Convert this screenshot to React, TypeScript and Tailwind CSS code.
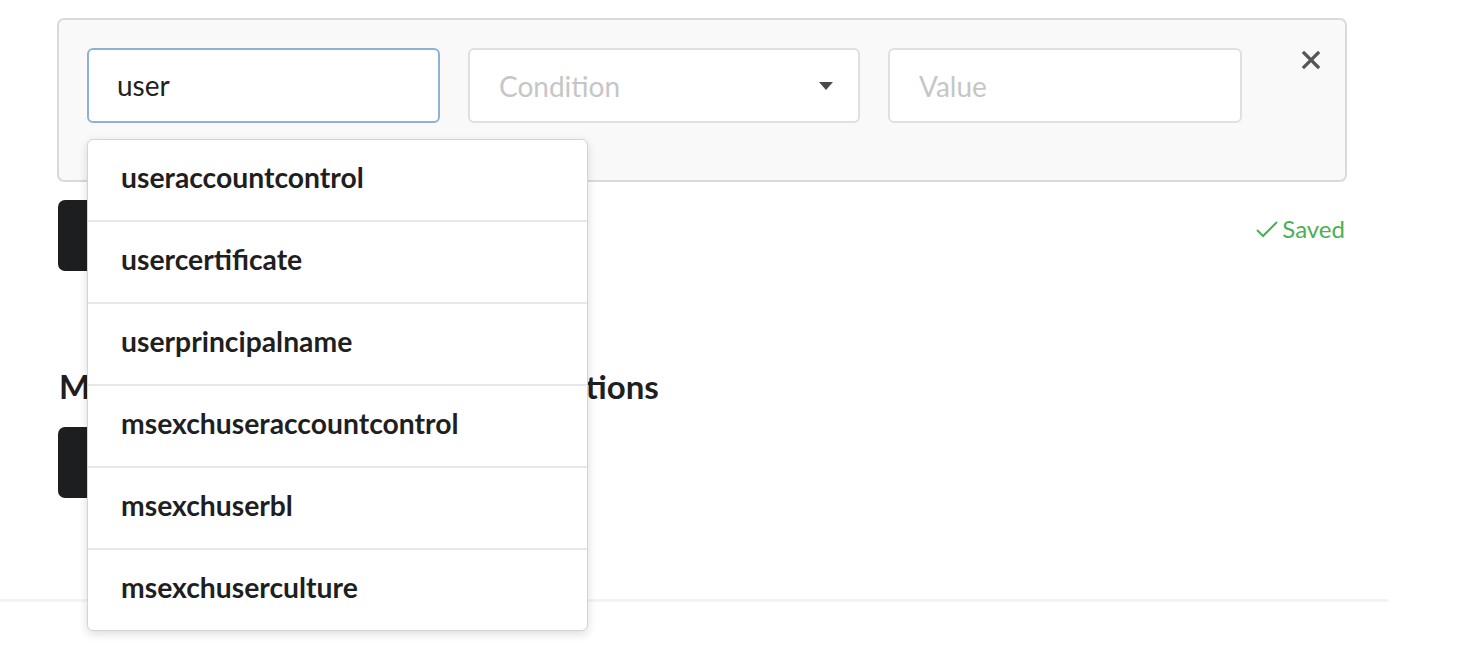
const suggestions = [
  'useraccountcontrol',
  'usercertificate',
  'userprincipalname',
  'msexchuseraccountcontrol',
  'msexchuserbl',
  'msexchuserculture',
]

export default function App() {
  return (
    <main className="min-h-screen bg-white text-[#222] font-['Lato','Open_Sans',sans-serif]">
      <div className="pl-[57px] pt-[18px] w-[1388px]">
        {/* Filter row */}
        <div className="w-[1290px] bg-[#f9f9f9] border-2 border-[#dadada] rounded-[7px] pl-[28px] pt-[28px] pb-[57px] flex">
          <div className="relative">
            <div className="w-[353px] h-[75px] bg-white border-2 border-[#8cb2d8] rounded-[6px] flex items-center pl-[28px] text-[28px] pb-px">
              user
            </div>
            <div className="absolute top-[91px] left-0 z-10 w-[501px] bg-white border border-[#d4d4d4] rounded-[6px] shadow-[0_3px_10px_rgba(0,0,0,0.14)] overflow-hidden">
              {suggestions.map((s, i) => (
                <div
                  key={s}
                  className={`flex items-center pl-[33px] pb-[5px] text-[28.3px] font-bold text-[#1f1f1f] ${i > 0 ? 'h-[82px] border-t-2 border-[#e8e8e8]' : 'h-[80px]'}`}
                >
                  {s}
                </div>
              ))}
            </div>
          </div>
          <div className="ml-[28px] w-[392px] h-[75px] bg-white border-2 border-[#e0e0e0] rounded-[6px] flex items-center justify-between pl-[29px] pr-[25px] text-[28px] text-[#c6c6c6]">
            <span>Condition</span>
            <svg width="14" height="8" viewBox="0 0 14 8"><path d="M0 0h14L7 8z" fill="#4a4a4a" /></svg>
          </div>
          <div className="ml-[28px] w-[354px] h-[75px] bg-white border-2 border-[#e0e0e0] rounded-[6px] flex items-center pl-[29px] text-[28px] text-[#c6c6c6]">
            Value
          </div>
          <button className="ml-auto mr-[25px] mt-[3px] self-start">
            <svg width="18" height="18" viewBox="0 0 18 18" stroke="#555" strokeWidth="3.2" strokeLinecap="square">
              <path d="M2 2l14 14M16 2L2 16" />
            </svg>
          </button>
        </div>

        <div className="w-[1290px] mt-[18px] flex items-center justify-between">
          <div className="w-[260px] h-[71px] bg-[#1d1e20] rounded-[7px] ml-px" />
          <div className="flex items-center gap-[4px] text-[24px] text-[#4cb050] mr-[2px] -mt-[13px]">
            <svg width="22" height="18" viewBox="0 0 22 18" fill="none" stroke="#4cb050" strokeWidth="2">
              <path d="M1 10l6 6L21 2" />
            </svg>
            Saved
          </div>
        </div>

        <h2 className="mt-[95px] ml-[2px] text-[33px] font-bold leading-[40px] text-[#1f1f1f]">
          Manage Directory Attribute Sync Actions
        </h2>
        <div className="mt-[21px] w-[260px] h-[71px] bg-[#1d1e20] rounded-[7px] ml-px" />
      </div>
      <div className="mt-[101px] w-[1388px] h-[3px] bg-[#f3f3f3]" />
    </main>
  )
}
